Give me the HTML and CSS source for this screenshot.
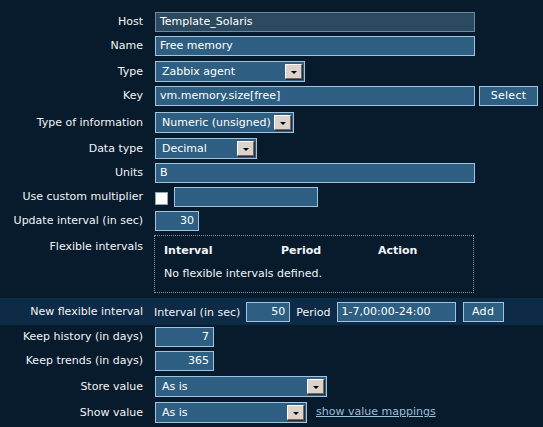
FILE: index.html
```
<!DOCTYPE html>
<html>
<head>
<meta charset="utf-8">
<link rel="stylesheet" href="styles.css">
</head>
<body>
<div class="form">
  <div class="row">
    <div class="lbl">Host</div>
    <div class="fld"><div class="box ro w320">Template_Solaris</div></div>
  </div>
  <div class="row">
    <div class="lbl">Name</div>
    <div class="fld"><div class="box w320">Free memory</div></div>
  </div>
  <div class="row sel-row">
    <div class="lbl">Type</div>
    <div class="fld"><div class="select w150"><span class="stext">Zabbix agent</span><span class="arrow"></span></div></div>
  </div>
  <div class="row key-row">
    <div class="lbl">Key</div>
    <div class="fld"><div class="box w320">vm.memory.size[free]</div><div class="btn w59">Select</div></div>
  </div>
  <div class="row sel-row">
    <div class="lbl">Type of information</div>
    <div class="fld"><div class="select w139"><span class="stext">Numeric (unsigned)</span><span class="arrow"></span></div></div>
  </div>
  <div class="row sel-row">
    <div class="lbl">Data type</div>
    <div class="fld"><div class="select w102"><span class="stext">Decimal</span><span class="arrow"></span></div></div>
  </div>
  <div class="row">
    <div class="lbl">Units</div>
    <div class="fld"><div class="box w320">B</div></div>
  </div>
  <div class="row">
    <div class="lbl">Use custom multiplier</div>
    <div class="fld"><span class="check"></span><div class="box w144"></div></div>
  </div>
  <div class="row">
    <div class="lbl">Update interval (in sec)</div>
    <div class="fld"><div class="box num w44">30</div></div>
  </div>
  <div class="row flex-row">
    <div class="lbl top">Flexible intervals</div>
    <div class="fld">
      <div class="flexbox">
        <div class="fhead"><span class="c1">Interval</span><span class="c2">Period</span><span class="c3">Action</span></div>
        <div class="fbody">No flexible intervals defined.</div>
      </div>
    </div>
  </div>
  <div class="row band">
    <div class="lbl">New flexible interval</div>
    <div class="fld inline">
      <span class="itext">Interval (in sec)</span>
      <div class="box num w44">50</div>
      <span class="itext">Period</span>
      <div class="box w119">1-7,00:00-24:00</div>
      <div class="btn w41 addbtn">Add</div>
    </div>
  </div>
  <div class="row">
    <div class="lbl">Keep history (in days)</div>
    <div class="fld"><div class="box num w59">7</div></div>
  </div>
  <div class="row">
    <div class="lbl">Keep trends (in days)</div>
    <div class="fld"><div class="box num w59">365</div></div>
  </div>
  <div class="row sel-row">
    <div class="lbl">Store value</div>
    <div class="fld"><div class="select w172"><span class="stext">As is</span><span class="arrow"></span></div></div>
  </div>
  <div class="row sel-row">
    <div class="lbl">Show value</div>
    <div class="fld"><div class="select w152"><span class="stext">As is</span><span class="arrow"></span></div><a class="link" href="#">show value mappings</a></div>
  </div>
</div>
</body>
</html>
```

FILE: styles.css
```
html, body {
  margin: 0;
  padding: 0;
  background: #081b2d;
  height: 100%;
}
body {
  font-family: "DejaVu Sans", Verdana, sans-serif;
  font-size: 11px;
  color: #f2f4f6;
}
.form {
  padding-top: 10px;
}
.row {
  display: grid;
  grid-template-columns: 143px 1fr;
  column-gap: 12px;
  align-items: center;
  padding: 2px 0;
}
.sel-row {
  padding: 3px 0 2px;
}
.key-row {
  padding: 2px 0 3px;
}
.lbl {
  text-align: right;
  white-space: nowrap;
  line-height: 16px;
}
.lbl.top {
  align-self: start;
  line-height: 20px;
  padding-top: 2px;
}
.fld {
  display: flex;
  align-items: flex-start;
  gap: 4px;
}
.box {
  box-sizing: border-box;
  height: 20px;
  background: #2e5f82;
  border: 1px solid #a0c4de;
  color: #ffffff;
  line-height: 18px;
  padding: 0 4px;
  white-space: nowrap;
  overflow: hidden;
}
.box.ro {
  background: #2b4a60;
  border-color: #6a8ba3;
}
.box.num {
  text-align: right;
}
.w320 { width: 320px; }
.w144 { width: 144px; }
.w44 { width: 44px; }
.w59 { width: 59px; }
.w119 { width: 119px; }
.w41 { width: 41px; }
.w150 { width: 150px; }
.w139 { width: 139px; }
.w102 { width: 102px; }
.w172 { width: 172px; }
.w152 { width: 152px; }
.btn {
  box-sizing: border-box;
  height: 20px;
  background: #2e5f82;
  border: 1px solid #a0c4de;
  color: #ffffff;
  line-height: 18px;
  text-align: center;
  letter-spacing: 0.3px;
}
.select {
  box-sizing: border-box;
  height: 21px;
  background: #2e5f82;
  border: 1px solid #a0c4de;
  color: #ffffff;
  display: flex;
  align-items: center;
  justify-content: space-between;
  padding-left: 6px;
  padding-right: 2px;
}
.stext {
  white-space: nowrap;
}
.arrow {
  box-sizing: border-box;
  width: 17px;
  height: 15px;
  background: #dcd4cc;
  border-top: 1px solid #ffffff;
  border-left: 1px solid #ffffff;
  border-right: 1px solid #6d6a66;
  border-bottom: 1px solid #6d6a66;
  box-shadow: 1px 1px 0 #2a2a2a;
  display: flex;
  align-items: center;
  justify-content: center;
}
.arrow::after {
  content: "";
  width: 0;
  height: 0;
  border-left: 3px solid transparent;
  border-right: 3px solid transparent;
  border-top: 3px solid #000000;
  margin-top: 2px;
}
.check {
  box-sizing: border-box;
  width: 13px;
  height: 13px;
  margin-top: 5px;
  margin-right: 2px;
  background: #ffffff;
  border: 1px solid #8ea4b6;
}
.flex-row {
  padding: 2px 0 5px;
}
.flexbox {
  box-sizing: border-box;
  width: 320px;
  height: 58px;
  margin-left: -1px;
  border: 1px dotted #7f95aa;
  padding: 6px 9px 0;
}
.fhead {
  display: flex;
  font-weight: bold;
  line-height: 18px;
}
.c1 { width: 117px; }
.c2 { width: 97px; }
.fbody {
  margin-top: 5px;
  line-height: 18px;
}
.band {
  background: #0d2a46;
  padding: 4px 0 3px;
}
.inline {
  align-items: center;
  gap: 6px;
  margin-left: -1px;
}
.itext {
  white-space: nowrap;
}
.addbtn {
  margin-left: 1px;
}
.link {
  color: #9dbfd9;
  text-decoration: underline;
  margin-left: 5px;
  line-height: 20px;
  white-space: nowrap;
}
```
